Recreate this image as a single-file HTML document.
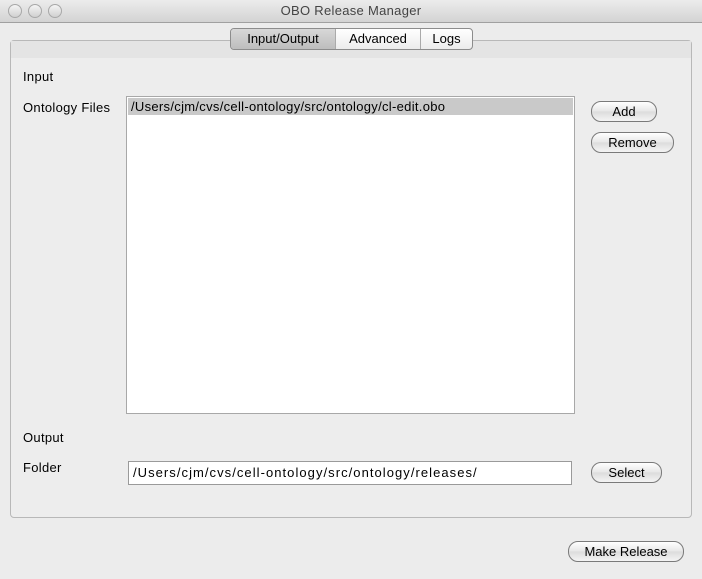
<!DOCTYPE html><html><head><style>
body{margin:0;width:702px;height:579px;background:#ececec;font-family:"Liberation Sans",sans-serif;font-size:13px;letter-spacing:0.3px;color:#000;position:relative;overflow:hidden}
.a{position:absolute}
.title{left:0;top:0;width:702px;height:22px;background:linear-gradient(#ececec,#d3d3d3);border-bottom:1px solid #a0a0a0;text-align:center;line-height:22px;color:#444;font-size:13px}
.dot{width:12px;height:12px;border-radius:50%;border:1px solid #a8a8a8;background:linear-gradient(#f4f4f4,#d0d0d0);top:4px}
.panel{left:10px;top:40px;width:680px;height:476px;border:1px solid #b8b8b8;border-radius:4px;background:#ededed}
.band{left:11px;top:41px;width:680px;height:17px;background:#e4e4e4}
.tabs{left:230px;top:28px;height:20px;border:1px solid #8c8c8c;border-radius:4px;background:linear-gradient(#fff,#ececec);display:flex;overflow:hidden}
.tabs div{line-height:20px;text-align:center;border-left:1px solid #aaa;letter-spacing:0}
.btn{height:19px;border:1px solid #7a7a7a;border-radius:10px;background:linear-gradient(#fff,#e6e6e6 50%,#dcdcdc 51%,#f4f4f4);text-align:center;line-height:19px;letter-spacing:0}
</style></head><body>
<div class="a title">OBO Release Manager</div>
<div class="a dot" style="left:8px"></div><div class="a dot" style="left:28px"></div><div class="a dot" style="left:48px"></div>
<div class="a panel"></div><div class="a band"></div>
<div class="a tabs"><div style="width:104px;border:none;background:linear-gradient(#d8d8d8,#bdbdbd)">Input/Output</div><div style="width:84px">Advanced</div><div style="width:51px">Logs</div></div>
<div class="a" style="left:23px;top:69px">Input</div>
<div class="a" style="left:23px;top:100px">Ontology Files</div>
<div class="a" style="left:126px;top:96px;width:447px;height:316px;background:#fff;border:1px solid #a8a8a8"></div>
<div class="a" style="left:128px;top:98px;width:445px;height:17px;background:#c9c9c9;line-height:17px;padding-left:3px;box-sizing:border-box">/Users/cjm/cvs/cell-ontology/src/ontology/cl-edit.obo</div>
<div class="a btn" style="left:591px;top:101px;width:64px">Add</div>
<div class="a btn" style="left:591px;top:132px;width:81px">Remove</div>
<div class="a" style="left:23px;top:430px">Output</div>
<div class="a" style="left:23px;top:460px">Folder</div>
<div class="a" style="left:128px;top:461px;width:438px;height:22px;background:#fff;border:1px solid #9a9a9a;line-height:22px;padding-left:4px;letter-spacing:1.05px">/Users/cjm/cvs/cell-ontology/src/ontology/releases/</div>
<div class="a btn" style="left:591px;top:462px;width:69px">Select</div>
<div class="a btn" style="left:568px;top:541px;width:114px">Make Release</div>
</body></html>
